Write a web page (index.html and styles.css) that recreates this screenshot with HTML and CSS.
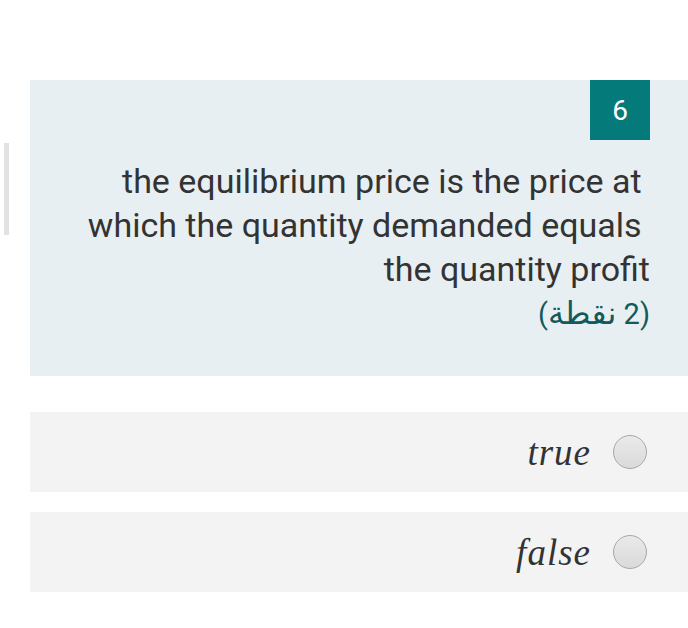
FILE: index.html
```html
<!DOCTYPE html>
<html>
<head>
<meta charset="utf-8">
<link rel="stylesheet" href="styles.css">
</head>
<body>
<div class="page">
  <div class="side-bar"></div>
  <div class="question">
    <div class="badge-row"><div class="badge">6</div></div>
    <div class="q-text">the equilibrium price is the price at&nbsp;<br>which the quantity demanded equals&nbsp;<br>the quantity profit</div>
    <div class="points">(2 <span class="ar">نقطة</span>)</div>
  </div>
  <div class="option">
    <span class="opt-label">true</span>
    <span class="radio"></span>
  </div>
  <div class="option">
    <span class="opt-label">false</span>
    <span class="radio"></span>
  </div>
</div>
</body>
</html>
```
FILE: styles.css
```css
html, body {
  margin: 0;
  padding: 0;
  background: #ffffff;
}
.page {
  position: relative;
  width: 688px;
  height: 628px;
  padding-top: 80px;
  box-sizing: border-box;
  font-family: Roboto, "Noto Sans", sans-serif;
}
.side-bar {
  position: absolute;
  left: 4px;
  top: 143px;
  width: 5px;
  height: 92px;
  background: #e2e2e2;
}
.question {
  margin-left: 30px;
  width: 658px;
  height: 296px;
  background: #e8eff2;
  box-sizing: border-box;
  padding-right: 38px;
}
.badge-row {
  display: flex;
  justify-content: flex-end;
}
.badge {
  width: 60px;
  height: 60px;
  background: #047a7a;
  color: #ffffff;
  font-size: 28px;
  display: flex;
  align-items: center;
  justify-content: center;
}
.q-text {
  margin-top: 19px;
  text-align: right;
  font-size: 34px;
  line-height: 44px;
  color: #333333;
}
.points {
  direction: rtl;
  text-align: right;
  font-size: 29px;
  line-height: 44px;
  color: #125a5c;
  font-family: Roboto, "DejaVu Sans", sans-serif;
}
.ar {
  font-size: 32px;
}
.option {
  margin-left: 30px;
  width: 658px;
  height: 80px;
  background: #f3f3f3;
  margin-top: 36px;
  display: flex;
  align-items: center;
  justify-content: flex-end;
  padding-right: 41px;
  box-sizing: border-box;
  gap: 22px;
}
.option + .option {
  margin-top: 20px;
}
.opt-label {
  font-family: "Liberation Serif", serif;
  font-style: italic;
  font-size: 37px;
  letter-spacing: 1px;
  color: #333333;
}
.radio {
  width: 32px;
  height: 32px;
  border-radius: 50%;
  border: 1px solid #a8a8a8;
  background: linear-gradient(#eaeaea, #dadada);
}
```
